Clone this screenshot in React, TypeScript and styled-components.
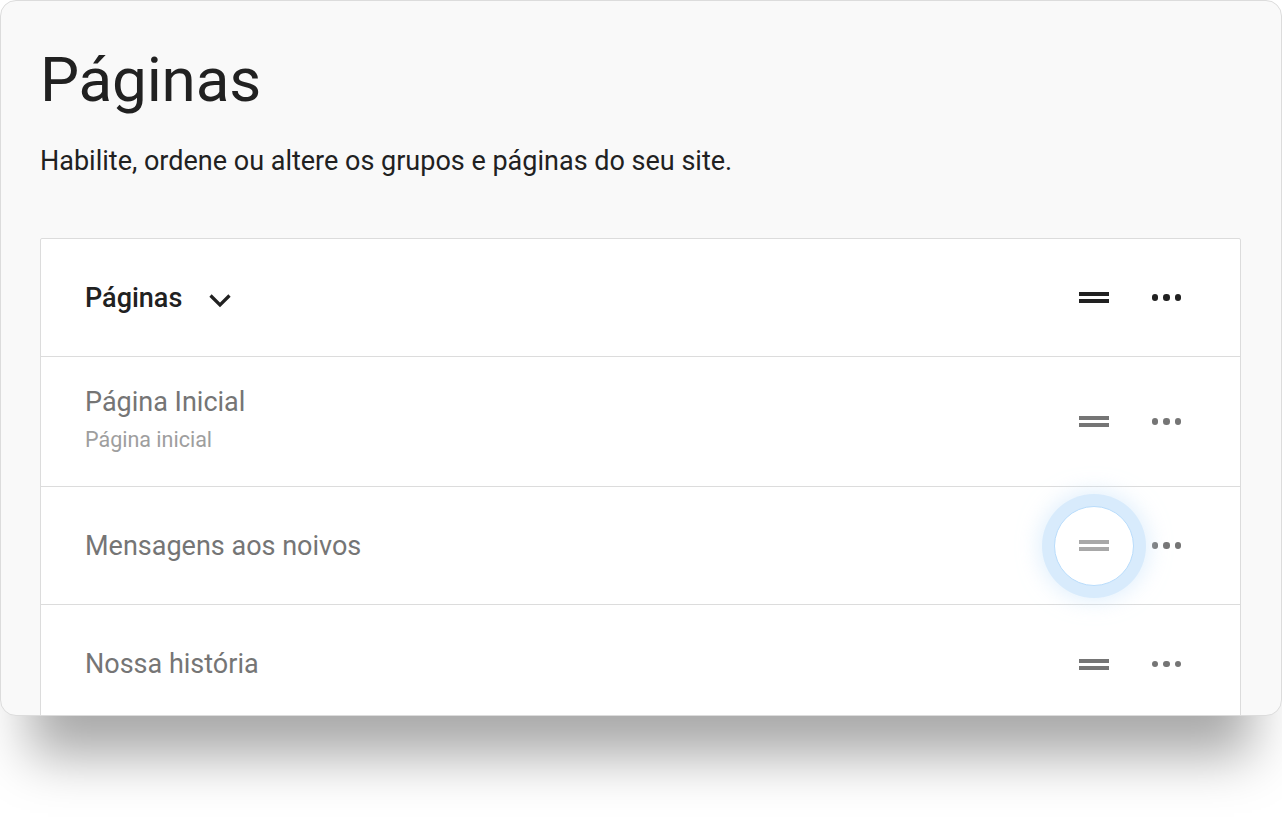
import styled, { createGlobalStyle } from 'styled-components';

const Global = createGlobalStyle`
  html, body { margin: 0; padding: 0; background: #ffffff; }
  body { font-family: Roboto, "Noto Sans", "Liberation Sans", sans-serif; }
`

const Stage = styled.div`
  width: 1282px;
  height: 817px;
  box-sizing: border-box;
`

const Window = styled.section`
  height: 716px;
  box-sizing: border-box;
  background: #f9f9f9;
  border: 1px solid #dcdcdc;
  border-radius: 16px;
  overflow: hidden;
  padding: 42px 40px 0 39px;
  box-shadow: 0 70px 50px -30px rgba(0, 0, 0, 0.34);
`

const Title = styled.h1`
  margin: 0;
  font-size: 62px;
  font-weight: 400;
  line-height: 74px;
  color: #212121;
  letter-spacing: -0.2px;
`

const Lead = styled.p`
  margin: 28px 0 0;
  font-size: 27px;
  line-height: 32px;
  color: #212121;
`

const List = styled.div`
  margin-top: 61px;
  background: #ffffff;
  border: 1px solid #dcdcdc;
  border-radius: 2px;
`

const Row = styled.div<{ $h: number }>`
  height: ${p => p.$h}px;
  display: flex;
  align-items: center;
  padding: 0 59px 0 44px;
  border-bottom: 1px solid #dcdcdc;
  box-sizing: border-box;
  &:last-child { border-bottom: none; }
`

const Labels = styled.div<{ $lift?: boolean }>`
  flex: 1;
  display: flex;
  flex-direction: column;
  gap: 9px;
  margin-bottom: ${p => (p.$lift ? 5 : 0)}px;
`

const GroupName = styled.div`
  display: flex;
  align-items: center;
  gap: 26px;
  font-size: 27px;
  line-height: 32px;
  font-weight: 500;
  color: #212121;
  svg { margin-top: 4px; }
`

const Name = styled.div`
  font-size: 27px;
  line-height: 32px;
  color: #757575;
`

const Sub = styled.div`
  font-size: 21.5px;
  line-height: 26px;
  color: #9e9e9e;
`

const Actions = styled.div`
  display: flex;
  align-items: center;
  gap: 43px;
`

const Handle = styled.div<{ $tone: string; $focus?: boolean }>`
  position: relative;
  width: 30px;
  height: 11px;
  display: flex;
  flex-direction: column;
  justify-content: space-between;
  &::before {
    content: '';
    display: ${p => (p.$focus ? 'block' : 'none')};
    position: absolute;
    left: 50%;
    top: 50%;
    width: 78px;
    height: 78px;
    transform: translate(-50%, -50%);
    border-radius: 50%;
    background: #ffffff;
    border: 1px solid #b9dcfb;
    box-shadow: 0 0 0 12px #d8ebfc, 0 0 22px 14px rgba(200, 226, 250, 0.6);
  }
  span {
    position: relative;
    display: block;
    height: 4px;
    background: ${p => p.$tone};
  }
`

const Dots = styled.div<{ $tone: string }>`
  display: flex;
  gap: 5px;
  span {
    width: 6.5px;
    height: 6.5px;
    border-radius: 50%;
    background: ${p => p.$tone};
  }
`

function Chevron() {
  return (
    <svg width="24" height="16" viewBox="0 0 24 16">
      <polyline points="2.5,3.5 12,13 21.5,3.5" fill="none" stroke="#212121" strokeWidth="3.2" />
    </svg>
  );
}

function RowActions({ tone, focus }: { tone: string; focus?: boolean }) {
  return (
    <Actions>
      <Handle $tone={focus ? '#a8a8a8' : tone} $focus={focus}>
        <span />
        <span />
      </Handle>
      <Dots $tone={tone}>
        <span />
        <span />
        <span />
      </Dots>
    </Actions>
  );
}

const pages = [
  { name: 'Página Inicial', sub: 'Página inicial', h: 130 },
  { name: 'Mensagens aos noivos', h: 118, focus: true },
  { name: 'Nossa história', h: 118 },
];

export default function App() {
  return (
    <Stage>
      <Global />
      <Window>
        <Title>Páginas</Title>
        <Lead>Habilite, ordene ou altere os grupos e páginas do seu site.</Lead>
        <List>
          <Row $h={118}>
            <Labels>
              <GroupName>
                Páginas
                <Chevron />
              </GroupName>
            </Labels>
            <RowActions tone="#212121" />
          </Row>
          {pages.map(p => (
            <Row key={p.name} $h={p.h}>
              <Labels $lift={!!p.sub}>
                <Name>{p.name}</Name>
                {p.sub && <Sub>{p.sub}</Sub>}
              </Labels>
              <RowActions tone="#757575" focus={p.focus} />
            </Row>
          ))}
        </List>
      </Window>
    </Stage>
  );
}
